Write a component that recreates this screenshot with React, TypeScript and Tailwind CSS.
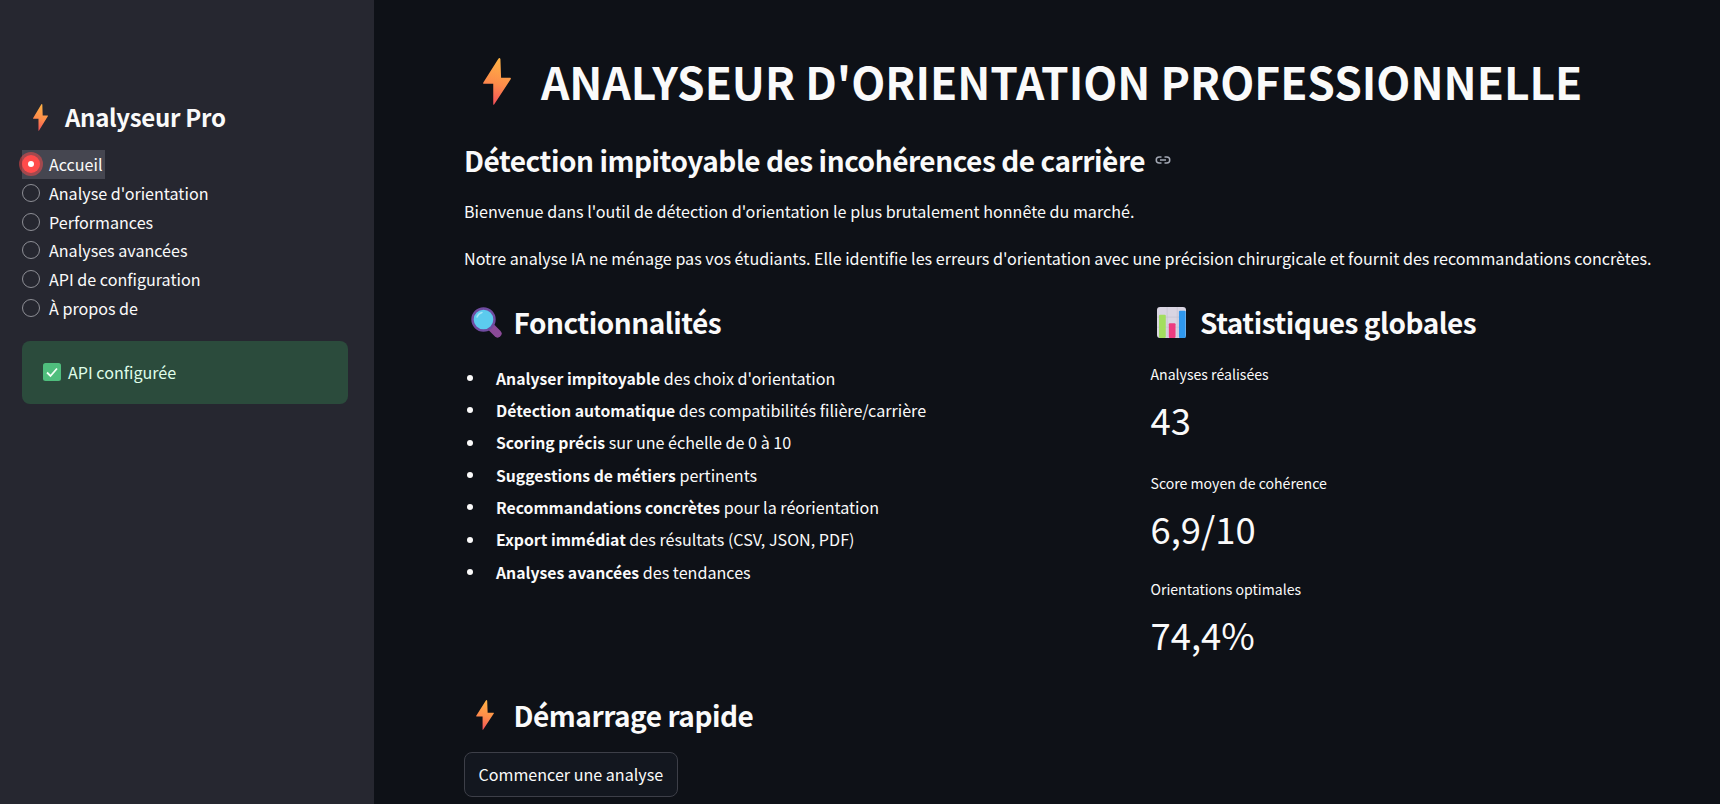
import { type ReactNode } from 'react';

const NAV = ['Accueil', "Analyse d'orientation", 'Performances', 'Analyses avancées', 'API de configuration', 'À propos de'];

const FEATURES: [string, string][] = [
  ['Analyser impitoyable', " des choix d'orientation"],
  ['Détection automatique', ' des compatibilités filière/carrière'],
  ['Scoring précis', ' sur une échelle de 0 à 10'],
  ['Suggestions de métiers', ' pertinents'],
  ['Recommandations concrètes', ' pour la réorientation'],
  ['Export immédiat', ' des résultats (CSV, JSON, PDF)'],
  ['Analyses avancées', ' des tendances'],
];

const STATS = [
  { label: 'Analyses réalisées', value: '43', cls: 'h-[108.5px]' },
  { label: 'Score moyen de cohérence', value: '6,9/10', cls: 'h-[106.5px]' },
  { label: 'Orientations optimales', value: '74,4%', cls: 'h-[99px]' },
];

function Bolt({ className, id }: { className: string; id: string }) {
  return (
    <svg viewBox="0 0 82 142" preserveAspectRatio="none" className={className}>
      <defs>
        <linearGradient id={id} x1="0.6" y1="0" x2="0.4" y2="1">
          <stop offset="0" stopColor="#ffb445" />
          <stop offset="0.55" stopColor="#fd8c4a" />
          <stop offset="1" stopColor="#f4505a" />
        </linearGradient>
      </defs>
      <path d="M45 2 Q49 -2 51 3 L53 60 L80 60 Q83 60 81 64 L33 140 Q30 144 30 138 L30 78 L3 78 Q-1 78 1 74 Z" fill={`url(#${id})`} />
    </svg>
  );
}

function Magnifier() {
  return (
    <svg viewBox="0 0 31 31" className="ml-[6.5px] h-[31px] w-[31px] shrink-0">
      <path d="M21 21 L26.5 26.5" stroke="#8b4a98" strokeWidth="8" strokeLinecap="round" />
      <circle cx="12.5" cy="12.5" r="11" fill="#5ccbee" stroke="#6f4ba0" strokeWidth="2.4" />
      <path d="M6 10 a7 7 0 0 1 5 -4.5" fill="none" stroke="#a4e6f8" strokeWidth="1.5" strokeLinecap="round" />
    </svg>
  );
}

function ChartEmoji() {
  return (
    <svg viewBox="0 0 86 92" preserveAspectRatio="none" className="ml-[6.5px] h-[31px] w-[29px] shrink-0">
      <rect width="86" height="92" rx="9" fill="#d9d5e2" />
      <path d="M30 0 V92 M60 0 V92 M0 30 H86 M0 60 H86" stroke="#c5c0cf" strokeWidth="2" />
      <rect x="6" y="23" width="20" height="69" rx="3" fill="#a3de5e" />
      <rect x="35" y="48" width="20" height="44" rx="3" fill="#ec3c80" />
      <rect x="65" y="11" width="20" height="81" rx="3" fill="#2f98ee" />
    </svg>
  );
}

function CheckEmoji() {
  return (
    <svg viewBox="0 0 18 18" className="h-[18px] w-[18px] shrink-0">
      <rect width="18" height="18" rx="2.5" fill="#4fbe7d" />
      <path d="M4 9.5 L7.5 13 L14 5.5" fill="none" stroke="#f4fff6" strokeWidth="1.8" />
    </svg>
  );
}

function LinkIcon() {
  return (
    <svg viewBox="0 0 24 24" fill="none" stroke="#a3a8b4" strokeWidth="2" className="ml-[9px] h-[18px] w-[18px]">
      <path d="M10 8 H7 a4 4 0 0 0 0 8 h3 M14 8 h3 a4 4 0 0 1 0 8 h-3 M8 12 h8" />
    </svg>
  );
}

function Heading({ icon, children }: { icon: ReactNode; children: ReactNode }) {
  return (
    <h3 className="flex h-[40px] items-center text-[28px] font-semibold tracking-[-0.47px] text-[#fafafa]">
      <span className="flex w-[49.5px]">{icon}</span>
      {children}
    </h3>
  );
}

export default function App() {
  return (
    <div className="flex h-[804px] overflow-hidden bg-[#0e1117] font-['Noto_Sans_CJK_SC','Noto_Sans',sans-serif] text-[16.12px] text-[#fafafa]">
      <aside className="w-[374px] shrink-0 bg-[#262730] pt-[97px] pr-[26px] pl-[22px]">
        <div className="flex h-[40px] items-center pl-[11px] text-[24px] font-semibold tracking-[-0.3px]">
          <Bolt id="bolt-side" className="mr-[17px] h-[27px] w-[15px]" />
          Analyseur Pro
        </div>
        <div className="mt-[13px]">
          {NAV.map((item, i) => (
            <div key={item} className="flex h-[28.7px] items-center">
              <span className={i === 0 ? 'flex h-[29px] items-center bg-[#454650] pr-[2px]' : 'flex items-center'}>
                {i === 0 ? (
                  <span className="flex h-[18px] w-[18px] items-center justify-center rounded-full bg-[#ff4b4b] shadow-[0_0_0_3px_rgba(255,75,75,0.5)]">
                    <span className="h-[6px] w-[6px] rounded-full bg-white" />
                  </span>
                ) : (
                  <span className="h-[18px] w-[18px] rounded-full border border-[#8d8e95]" />
                )}
                <span className="ml-[9px]">{item}</span>
              </span>
            </div>
          ))}
        </div>
        <div className="mt-[18.5px] flex h-[63px] items-center rounded-[8px] bg-[#2b4b3c] px-[21px] text-[#dffde9]">
          <CheckEmoji />
          <span className="ml-[7px]">API configurée</span>
        </div>
      </aside>
      <main className="min-w-0 flex-1 pl-[90px]">
        <h1 className="mt-[45px] flex h-[72px] items-center text-[44.25px] font-bold whitespace-nowrap">
          <span className="flex w-[77px] pl-[19px]">
            <Bolt id="bolt-title" className="h-[47px] w-[28px]" />
          </span>
          ANALYSEUR D'ORIENTATION PROFESSIONNELLE
        </h1>
        <h2 className="mt-[21px] flex h-[44px] items-center text-[28px] font-semibold tracking-[-0.46px]">
          Détection impitoyable des incohérences de carrière
          <LinkIcon />
        </h2>
        <p className="mt-[17px] h-[24px] leading-[24px]">Bienvenue dans l'outil de détection d'orientation le plus brutalement honnête du marché.</p>
        <p className="mt-[23px] h-[24px] leading-[24px]">
          Notre analyse IA ne ménage pas vos étudiants. Elle identifie les erreurs d'orientation avec une précision chirurgicale et fournit des recommandations concrètes.
        </p>
        <div className="mt-[32px] flex">
          <section className="w-[686.5px]">
            <Heading icon={<Magnifier />}>Fonctionnalités</Heading>
            <ul className="mt-[20px]">
              {FEATURES.map(([strong, rest]) => (
                <li key={strong} className="flex h-[32.3px] items-center">
                  <span className="ml-[3px] h-[6px] w-[6px] rounded-full bg-[#fafafa]" />
                  <span className="ml-[23px]">
                    <strong className="text-[15.75px] font-semibold">{strong}</strong>
                    {rest}
                  </span>
                </li>
              ))}
            </ul>
          </section>
          <section className="flex-1">
            <Heading icon={<ChartEmoji />}>Statistiques globales</Heading>
            <div className="mt-[20px]">
              {STATS.map((s) => (
                <div key={s.label} className={s.cls}>
                  <div className="h-[24px] text-[14.1px] leading-[24px]">{s.label}</div>
                  <div className="mt-[7px] text-[36.4px] leading-[52px]">{s.value}</div>
                </div>
              ))}
            </div>
          </section>
        </div>
        <div className="mt-[18.5px]">
          <Heading icon={<Bolt id="bolt-quick" className="ml-[12px] h-[30px] w-[18px]" />}>Démarrage rapide</Heading>
        </div>
        <button className="mt-[17.5px] h-[45px] rounded-[8px] border border-[#3d3f48] bg-[#13171f] px-[13.5px] text-[16.1px] text-[#fafafa]">
          Commencer une analyse
        </button>
      </main>
    </div>
  );
}
